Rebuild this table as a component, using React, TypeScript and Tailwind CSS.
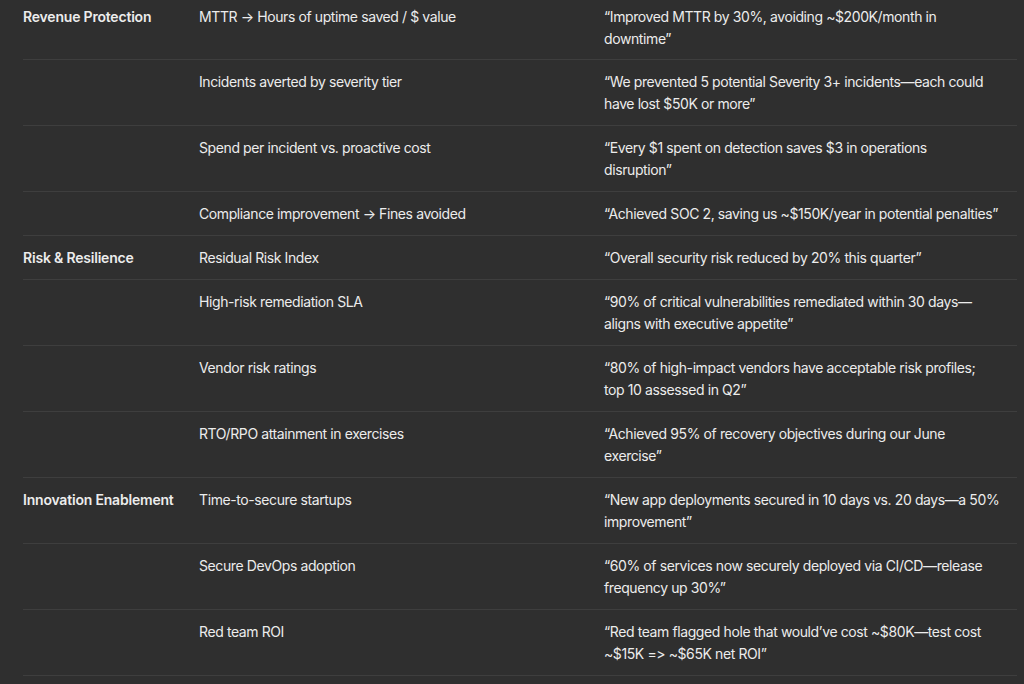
const rows: { group?: string; metric: string; quote: string[] }[] = [
  {
    group: "Revenue Protection",
    metric: "MTTR → Hours of uptime saved / $ value",
    quote: ["“Improved MTTR by 30%, avoiding ~$200K/month in", "downtime”"],
  },
  {
    metric: "Incidents averted by severity tier",
    quote: ["“We prevented 5 potential Severity 3+ incidents—each could", "have lost $50K or more”"],
  },
  {
    metric: "Spend per incident vs. proactive cost",
    quote: ["“Every $1 spent on detection saves $3 in operations", "disruption”"],
  },
  {
    metric: "Compliance improvement → Fines avoided",
    quote: ["“Achieved SOC 2, saving us ~$150K/year in potential penalties”"],
  },
  {
    group: "Risk & Resilience",
    metric: "Residual Risk Index",
    quote: ["“Overall security risk reduced by 20% this quarter”"],
  },
  {
    metric: "High-risk remediation SLA",
    quote: ["“90% of critical vulnerabilities remediated within 30 days—", "aligns with executive appetite”"],
  },
  {
    metric: "Vendor risk ratings",
    quote: ["“80% of high-impact vendors have acceptable risk profiles;", "top 10 assessed in Q2”"],
  },
  {
    metric: "RTO/RPO attainment in exercises",
    quote: ["“Achieved 95% of recovery objectives during our June", "exercise”"],
  },
  {
    group: "Innovation Enablement",
    metric: "Time-to-secure startups",
    quote: ["“New app deployments secured in 10 days vs. 20 days—a 50%", "improvement”"],
  },
  {
    metric: "Secure DevOps adoption",
    quote: ["“60% of services now securely deployed via CI/CD—release", "frequency up 30%”"],
  },
  {
    metric: "Red team ROI",
    quote: ["“Red team flagged hole that would’ve cost ~$80K—test cost", "~$15K => ~$65K net ROI”"],
  },
];

export default function App() {
  return (
    <div className="h-[684px] overflow-hidden bg-[#2f2f2f] pl-[23px] pr-[7px] font-['Inter','Liberation_Sans',sans-serif] text-[14px] leading-[22px] tracking-[-0.4px] text-[#ececec]">
      <div className="-mt-[5px]">
        {rows.map((row, i) => (
          <div
            key={i}
            className={`flex border-b border-[#3e3e3e] pt-[11px] ${i === 0 ? "pb-[9px]" : "pb-[10px]"}`}
          >
            <div className="w-[176px] shrink-0 font-semibold tracking-[-0.2px]">{row.group}</div>
            <div className="w-[405px] shrink-0">{row.metric}</div>
            <div className="flex-1">
              {row.quote.map((line) => (
                <div key={line} className="whitespace-nowrap">
                  {line}
                </div>
              ))}
            </div>
          </div>
        ))}
      </div>
    </div>
  );
}
